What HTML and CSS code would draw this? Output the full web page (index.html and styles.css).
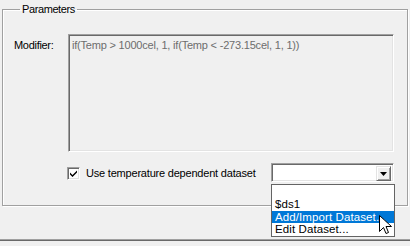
FILE: index.html
```html
<!DOCTYPE html>
<html>
<head>
<meta charset="utf-8">
<link rel="stylesheet" href="styles.css">
</head>
<body>
<div class="page">
  <fieldset class="group">
    <legend class="group-title">Parameters</legend>
    <div class="row-modifier">
      <span class="label">Modifier:</span>
      <div class="textbox">if(Temp &gt; 1000cel, 1, if(Temp &lt; -273.15cel, 1, 1))</div>
    </div>
    <div class="row-dataset">
      <span class="checkbox">
        <svg width="9" height="9" viewBox="0 0 9 9"><path d="M1 3.5 L3.5 6 L8 1.5 L8 3.5 L3.5 8 L1 5.5 Z" fill="#000"/></svg>
      </span>
      <span class="check-label">Use temperature dependent dataset</span>
      <div class="combo">
        <span class="combo-field"></span>
        <span class="combo-btn">
          <svg width="7" height="4" viewBox="0 0 7 4"><path d="M0 0 H7 L3.5 4 Z" fill="#000"/></svg>
        </span>
        <ul class="combo-list">
          <li class="item"></li>
          <li class="item">$ds1</li>
          <li class="item selected">Add/Import Dataset...</li>
          <li class="item">Edit Dataset...</li>
        </ul>
      </div>
    </div>
  </fieldset>
  <div class="bottom-edge"></div>
</div>
<svg class="cursor" width="13" height="21" viewBox="0 0 13 21">
  <path d="M0.5 0.5 V16.5 L4.5 12.5 L7 18.5 L9.5 17.5 L7 11.5 H12.5 Z" fill="#fff" stroke="#000" stroke-width="1" stroke-linejoin="miter"/>
</svg>
</body>
</html>
```
FILE: styles.css
```css
html, body {
  margin: 0;
  padding: 0;
}
body {
  width: 410px;
  height: 246px;
  overflow: hidden;
  background: #f0f0f0;
  font-family: "Liberation Sans", Arial, sans-serif;
  font-size: 11px;
  color: #000;
  position: relative;
}
.page {
  padding: 3px 0 0 2px;
}
.group {
  margin: 0;
  padding: 0 0 23px 11px;
  width: 393px;
  border: 1px solid #a0a0a0;
  box-shadow: 1px 1px 0 #fff, inset 1px 1px 0 #fff;
  min-width: 0;
}
.group-title {
  margin-left: 6px;
  padding: 0 2px;
  line-height: 13px;
  height: 13px;
  letter-spacing: -0.4px;
}
.row-modifier {
  display: flex;
  margin-top: 18px;
}
.label {
  width: 54px;
  padding-top: 5px;
  letter-spacing: -0.3px;
}
.textbox {
  box-sizing: border-box;
  width: 326px;
  height: 118px;
  border-top: 1px solid #a0a0a0;
  border-left: 1px solid #a0a0a0;
  border-right: 1px solid #fff;
  border-bottom: 1px solid #fff;
  box-shadow: inset 1px 1px 0 #696969, inset -1px -1px 0 #e3e3e3;
  padding: 4px 0 0 3px;
  color: #6d6d6d;
  letter-spacing: -0.2px;
  white-space: nowrap;
}
.row-dataset {
  display: flex;
  align-items: center;
  margin-top: 11px;
  padding-left: 53px;
}
.checkbox {
  box-sizing: border-box;
  width: 13px;
  height: 13px;
  background: #fff;
  border-top: 1px solid #a0a0a0;
  border-left: 1px solid #a0a0a0;
  border-right: 1px solid #fff;
  border-bottom: 1px solid #fff;
  box-shadow: inset 1px 1px 0 #696969, inset -1px -1px 0 #e3e3e3;
  display: flex;
  align-items: center;
  justify-content: center;
  margin-top: 2px;
}
.check-label {
  margin-left: 6px;
  width: 185px;
  letter-spacing: -0.2px;
}
.combo {
  position: relative;
  box-sizing: border-box;
  width: 123px;
  height: 19px;
  background: #fff;
  border-top: 1px solid #a0a0a0;
  border-left: 1px solid #a0a0a0;
  border-right: 1px solid #fff;
  border-bottom: 1px solid #fff;
  box-shadow: inset 1px 1px 0 #696969, inset -1px -1px 0 #e3e3e3;
  display: flex;
  justify-content: flex-end;
  padding: 2px;
}
.combo-field {
  flex: 1;
}
.combo-btn {
  box-sizing: border-box;
  width: 15px;
  height: 15px;
  background: #f0f0f0;
  border-top: 1px solid #e3e3e3;
  border-left: 1px solid #e3e3e3;
  border-right: 1px solid #696969;
  border-bottom: 1px solid #696969;
  box-shadow: inset 1px 1px 0 #fff, inset -1px -1px 0 #a0a0a0;
  display: flex;
  align-items: center;
  justify-content: center;
}
.combo-list {
  position: absolute;
  left: -1px;
  top: 20px;
  box-sizing: border-box;
  width: 124px;
  margin: 0;
  padding: 0;
  list-style: none;
  background: #fff;
  border: 1px solid #646464;
  font-size: 11.5px;
}
.item {
  height: 13px;
  line-height: 13px;
  padding-left: 3px;
  white-space: nowrap;
  letter-spacing: 0.1px;
}
.item.selected {
  background: #0078d7;
  color: #fff;
  height: 12px;
  line-height: 12px;
}
.bottom-edge {
  margin: 33px 0 0 -2px;
  height: 0;
  border-top: 1px solid #a0a0a0;
  border-bottom: 1px solid #696969;
}
.cursor {
  position: absolute;
  left: 379px;
  top: 215px;
}
```
